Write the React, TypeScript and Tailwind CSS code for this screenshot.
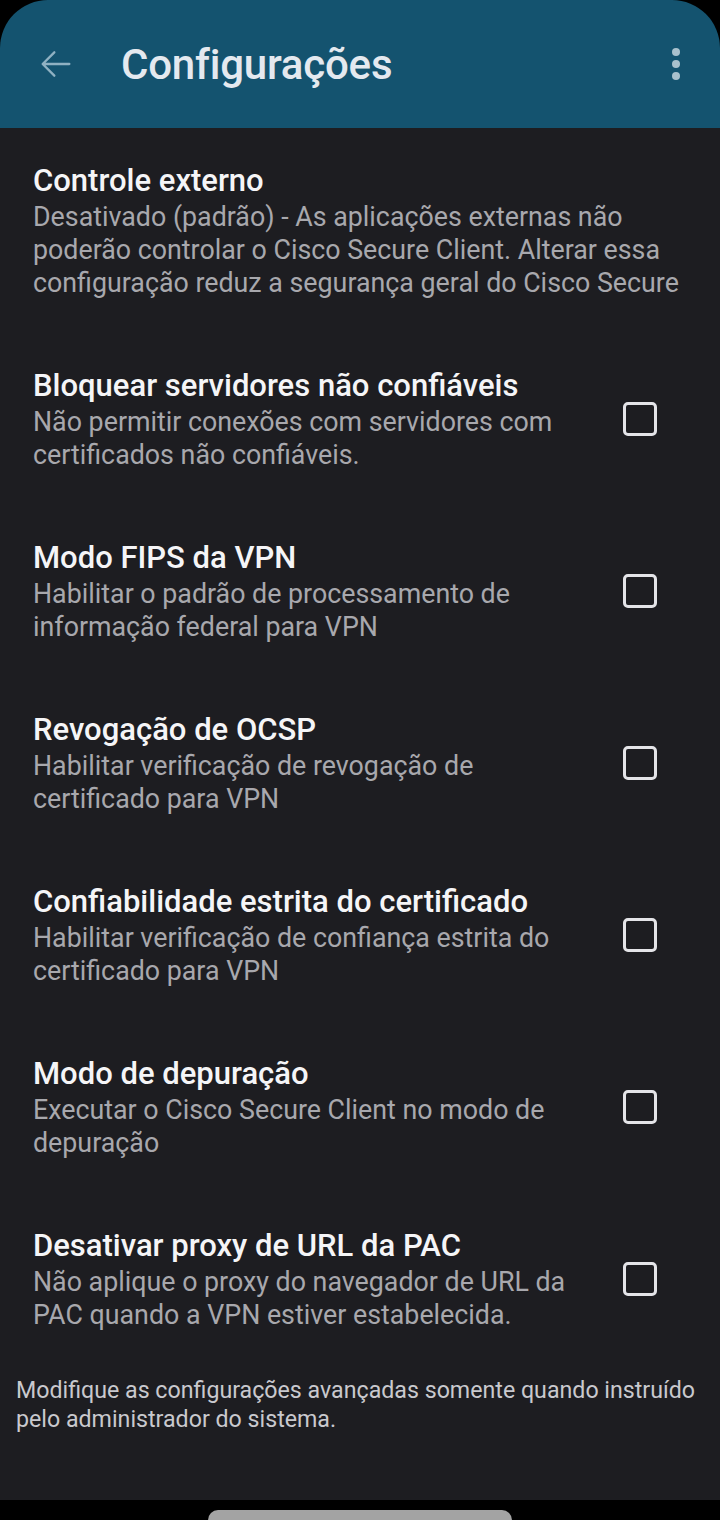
const items = [
  {
    title: "Bloquear servidores não confiáveis",
    desc: "Não permitir conexões com servidores com certificados não confiáveis.",
  },
  {
    title: "Modo FIPS da VPN",
    desc: "Habilitar o padrão de processamento de informação federal para VPN",
  },
  {
    title: "Revogação de OCSP",
    desc: "Habilitar verificação de revogação de certificado para VPN",
  },
  {
    title: "Confiabilidade estrita do certificado",
    desc: "Habilitar verificação de confiança estrita do certificado para VPN",
  },
  {
    title: "Modo de depuração",
    desc: "Executar o Cisco Secure Client no modo de depuração",
  },
  {
    title: "Desativar proxy de URL da PAC",
    desc: "Não aplique o proxy do navegador de URL da PAC quando a VPN estiver estabelecida.",
  },
];

export default function App() {
  return (
    <div
      className="w-[720px] h-[1520px] bg-black flex flex-col overflow-hidden"
      style={{ fontFamily: "Roboto, 'Noto Sans', sans-serif" }}
    >
      {/* app bar */}
      <header className="h-[128px] shrink-0 bg-[#14536f] rounded-t-[48px] flex items-center px-[36px]">
        <svg width="40" height="40" viewBox="0 0 24 24" fill="none" stroke="#8fb1c2" strokeWidth="1.4" strokeLinecap="round" strokeLinejoin="round">
          <path d="M20 12H4.5M11 5l-7 7 7 7" />
        </svg>
        <h1 className="ml-[45px] text-[42px] font-medium text-[#e4e9ef] tracking-[-0.2px]">Configurações</h1>
        <div className="ml-auto mr-[4px] flex flex-col gap-[4px]">
          <span className="w-[8px] h-[8px] rounded-full bg-[#a9c1cd]" />
          <span className="w-[8px] h-[8px] rounded-full bg-[#a9c1cd]" />
          <span className="w-[8px] h-[8px] rounded-full bg-[#a9c1cd]" />
        </div>
      </header>

      <main className="flex-1 bg-[#1d1d21] pt-[33px]">
        <div className="px-[33px]">
          <div className="text-[31px] leading-[40px] font-medium text-[#f5f5f7]">Controle externo</div>
          <p className="text-[26.8px] leading-[33px] text-[#a8a8ad]">
            Desativado (padrão) - As aplicações externas não poderão controlar o Cisco Secure Client. Alterar essa configuração reduz a segurança geral do Cisco Secure
          </p>
        </div>

        {items.map((it) => (
          <div key={it.title} className="mt-[66px] flex items-center pl-[33px]">
            <div className="w-[555px]">
              <div className="text-[31px] leading-[40px] font-medium text-[#f5f5f7]">{it.title}</div>
              <p className="text-[26.8px] leading-[33px] text-[#a8a8ad]">{it.desc}</p>
            </div>
            <div className="ml-[35px] w-[34px] h-[34px] rounded-[5px] border-[3.5px] border-[#e4e4e8]" />
          </div>
        ))}

        <p className="mt-[44px] px-[16px] text-[23.2px] leading-[29px] text-[#c9c9ce]">
          Modifique as configurações avançadas somente quando instruído pelo administrador do sistema.
        </p>
      </main>

      {/* gesture bar */}
      <div className="h-[20px] shrink-0 bg-black flex justify-center pt-[10px]">
        <div className="w-[304px] h-[10px] rounded-t-full bg-[#a3a3a3]" />
      </div>
    </div>
  );
}
